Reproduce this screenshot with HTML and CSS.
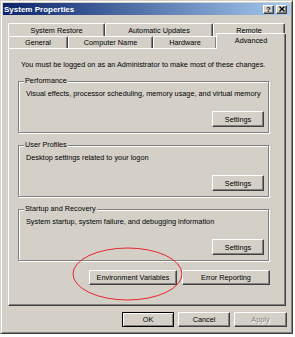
FILE: index.html
```html
<!DOCTYPE html>
<html>
<head>
    <meta charset="utf-8">
    <title>System Properties</title>
<link rel="stylesheet" href="styles.css">
</head>
<body>
    <div class="window">

        <div class="titlebar">
            <span class="title">System Properties</span>
            <div class="ctrls">
                <span class="cbtn">?</span>
                <span class="cbtn">
                    <svg width="6" height="6" viewBox="0 0 6 6"><path d="M0.5 0.5 L5.5 5.5 M5.5 0.5 L0.5 5.5" stroke="#000" stroke-width="1.3"/></svg>
                </span>
            </div>
        </div>

        <div class="tabs">
            <div class="tabrow back">
                <span class="tab t-restore">System Restore</span>
                <span class="tab t-updates">Automatic Updates</span>
                <span class="tab t-remote">Remote</span>
            </div>
            <div class="tabrow front">
                <span class="tab t-general">General</span>
                <span class="tab t-name">Computer Name</span>
                <span class="tab t-hardware">Hardware</span>
                <span class="tab active">Advanced</span>
            </div>
        </div>

        <div class="panel">
            <p class="notice">You must be logged on as an Administrator to make most of these changes.</p>

            <fieldset class="group">
                <legend>Performance</legend>
                <p class="desc">Visual effects, processor scheduling, memory usage, and virtual memory</p>
                <div class="btnrow"><button class="btn">Settings</button></div>
            </fieldset>

            <fieldset class="group">
                <legend>User Profiles</legend>
                <p class="desc">Desktop settings related to your logon</p>
                <div class="btnrow"><button class="btn">Settings</button></div>
            </fieldset>

            <fieldset class="group">
                <legend>Startup and Recovery</legend>
                <p class="desc">System startup, system failure, and debugging information</p>
                <div class="btnrow"><button class="btn">Settings</button></div>
            </fieldset>

            <div class="extra">
                <button class="btn wide">Environment Variables</button>
                <button class="btn wide">Error Reporting</button>
            </div>
        </div>

        <div class="footer">
            <button class="btn default">OK</button>
            <button class="btn">Cancel</button>
            <button class="btn disabled">Apply</button>
        </div>

        <!-- red marker drawn over the dialog -->
        <svg class="marker" width="111" height="54" viewBox="0 0 111 54">
            <ellipse cx="55.5" cy="27" rx="54.5" ry="26" fill="none" stroke="#e8262a" stroke-width="1"/>
        </svg>
    </div>
</body>
</html>
```

FILE: styles.css
```css
body,html{
    margin: 0;
    padding: 0;
    background-color: #fff;
}
body{
    font-family: "Liberation Sans", Arial, sans-serif;
    font-size: 7.3px;
    color: #000;
}
.window{
    position: relative;
    width: 291px;
    height: 332px;
    background-color: #d4d0c8;
    border: 1px solid;
    border-color: #d4d0c8 #404040 #404040 #d4d0c8;
    box-shadow: inset 1px 1px #fff, inset -1px -1px #808080;
    display: flex;
    flex-direction: column;
}
.titlebar{
    margin: 2px 2px 0 2px;
    height: 12px;
    padding: 0 3px 0 1px;
    background: linear-gradient(to right, #0a246a, #a6caf0);
    display: flex;
    align-items: center;
    justify-content: space-between;
}
.title{
    color: #fff;
    font-weight: bold;
    font-size: 8px;
}
.ctrls{
    display: flex;
    gap: 2px;
}
.cbtn{
    box-sizing: border-box;
    width: 11px;
    height: 9px;
    background-color: #d4d0c8;
    border: 1px solid;
    border-color: #fff #404040 #404040 #fff;
    box-shadow: inset -1px -1px #808080;
    display: flex;
    align-items: center;
    justify-content: center;
    font-weight: bold;
    font-size: 7px;
    line-height: 7px;
}
.tabs{
    margin: 8px 0 0 7px;
}
.tabrow{
    display: flex;
}
.tabrow.back{
    height: 13px;
}
.tabrow.front{
    height: 12px;
}
.tab{
    box-sizing: border-box;
    height: 100%;
    border: 1px solid;
    border-bottom: none;
    border-color: #fff #404040 #404040 #fff;
    border-radius: 2px 2px 0 0;
    box-shadow: inset -1px 0 #808080;
    background-color: #d4d0c8;
    display: flex;
    align-items: center;
    justify-content: center;
}
.t-restore{ width: 97px; }
.t-updates{ width: 108px; }
.t-remote{ width: 72px; }
.t-general{ width: 60px; }
.t-name{ width: 85px; }
.t-hardware{ width: 64px; }
.tab.active{
    position: relative;
    z-index: 1;
    width: 70px;
    height: 16px;
    margin: -3px -1px 0 -1px;
    align-items: flex-start;
    padding-top: 2px;
}
.panel{
    box-sizing: border-box;
    height: 258px;
    margin: 0 6px 0 7px;
    padding: 11px 16px 0 9px;
    border: 1px solid;
    border-color: #fff #404040 #404040 #fff;
    box-shadow: inset -1px -1px #808080;
}
.notice{
    margin: 0 0 0 3px;
    line-height: 9px;
    white-space: nowrap;
}
.group{
    margin: 8px 0 0 0;
    padding: 0 4px 5px 7px;
    border: 1px solid #808080;
    box-shadow: inset 1px 1px #fff, 1px 1px #fff;
}
.group legend{
    margin-left: -2px;
    padding: 0 1px;
    line-height: 8px;
    background-color: #d4d0c8;
}
.desc{
    margin: 4px 0 0 0;
    line-height: 9px;
    white-space: nowrap;
}
.btnrow{
    display: flex;
    justify-content: flex-end;
    margin-top: 13px;
}
.btn{
    box-sizing: border-box;
    width: 52px;
    height: 16px;
    padding: 0;
    font: inherit;
    color: #000;
    background-color: #d4d0c8;
    border: 1px solid;
    border-color: #fff #404040 #404040 #fff;
    box-shadow: inset -1px -1px #808080;
    display: flex;
    align-items: center;
    justify-content: center;
}
.extra{
    display: flex;
    justify-content: flex-end;
    gap: 5px;
    margin: 9px -1px 0 0;
}
.btn.wide{
    width: 88px;
    height: 15px;
}
.footer{
    display: flex;
    justify-content: flex-end;
    gap: 4px;
    margin: 6px 5px 0 0;
}
.footer .btn{
    height: 15px;
}
.btn.default{
    border: 1px solid #000;
    box-shadow: inset 1px 1px #fff, inset -1px -1px #808080;
}
.btn.disabled{
    width: 53px;
    color: #808080;
    text-shadow: 1px 1px #fff;
}
.marker{
    position: absolute;
    left: 71px;
    top: 246px;
}
```
